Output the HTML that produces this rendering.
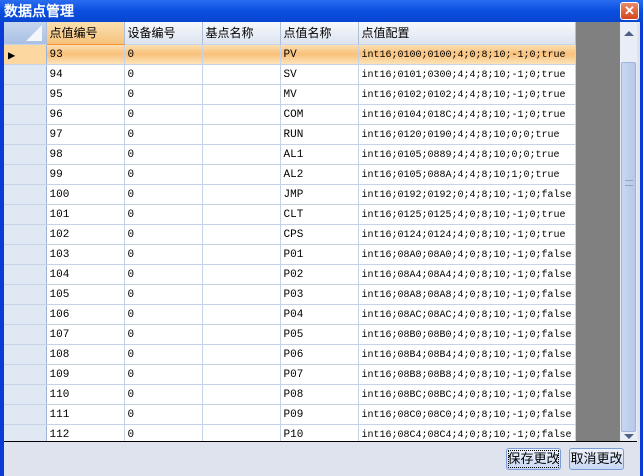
<!DOCTYPE html>
<html><head><meta charset="utf-8"><style>
*{margin:0;padding:0;box-sizing:border-box}
body{width:643px;height:476px;overflow:hidden;background:#0a3bd6;font-family:"Liberation Sans","WenQuanYi Zen Hei",sans-serif;position:relative}
.title{position:absolute;left:0;top:0;width:643px;height:22px;background:linear-gradient(#2a6cf0,#0a4ee0 50%,#0846d0);color:#fff;font-weight:bold;font-size:14px;line-height:22px;padding-left:4px;font-family:"WenQuanYi Zen Hei",sans-serif}
.close{position:absolute;right:4px;top:2px;width:19px;height:18px;background:linear-gradient(#e88a6a,#d4461e);border:1px solid #fff;border-radius:3px;color:#fff;font-size:13px;line-height:15px;text-align:center;font-weight:bold}
.client{position:absolute;left:4px;top:22px;width:636px;height:454px;background:#dfe3ee}
.grid{position:absolute;left:0;top:0;width:633px;height:420px;background:#808080;border-bottom:1px solid #000;overflow:hidden}
table{border-collapse:collapse;position:absolute;left:0;top:0;table-layout:fixed;width:571px;background:#fff}
td,th{height:20px;border-right:1px solid #c5d3e8;border-bottom:1px solid #c5d3e8;font-size:11px;padding-left:3px;padding-top:2px;text-align:left;white-space:nowrap;overflow:hidden;font-weight:normal}
th{height:22px;padding-top:0;background:linear-gradient(#f6f8fc,#dde4ef);font-size:12px;color:#000;border-right:1px solid #b0bfd6}
td.rh{background:#e0e8f4;border-right:1px solid #9fb5d6}
td{font-family:"Liberation Mono",monospace;font-size:11px}
td.c{font-size:10px}
tr.sel td{background:linear-gradient(#fde2b6,#f9c07a 50%,#fde2b6)}
tr.sel td.rh{background:#fcd7a0}
th.sel{background:linear-gradient(#fbe0b0,#f6c27c);border-bottom:1px solid #f29536}
.sb{position:absolute;left:616px;top:0;width:17px;height:420px;background:#e9edf5}
.thumb{position:absolute;left:617px;top:40px;width:15px;height:370px;background:linear-gradient(90deg,#c9d7f0,#b6c8ea);border:1px solid #9fb3dc;border-radius:2px}
.btn{position:absolute;top:426px;height:22px;width:55px;border:1px solid #7b9bd6;border-radius:3px;background:linear-gradient(#eef3fc,#c8d8f4);font-size:13px;text-align:center;line-height:20px;font-family:"WenQuanYi Zen Hei",sans-serif}
</style></head><body>
<div class="title">数据点管理<div class="close">✕</div></div>
<div class="client">
<div class="grid">
<table>
<colgroup><col style="width:42px"><col style="width:78px"><col style="width:78px"><col style="width:78px"><col style="width:78px"><col style="width:217px"></colgroup>
<tr><th style="background:linear-gradient(#c6d6ee,#a9c0e4);position:relative"><span style="position:absolute;right:4px;bottom:3px;width:0;height:0;border-left:16px solid transparent;border-bottom:16px solid #f4f6fb"></span></th><th class="sel">点值编号</th><th>设备编号</th><th>基点名称</th><th>点值名称</th><th>点值配置</th></tr>
<tr class="sel"><td class="rh" style="font-size:12px;padding-left:4px">▶</td><td>93</td><td>0</td><td></td><td>PV</td><td class="c">int16;0100;0100;4;0;8;10;-1;0;true</td></tr>
<tr><td class="rh"></td><td>94</td><td>0</td><td></td><td>SV</td><td class="c">int16;0101;0300;4;4;8;10;-1;0;true</td></tr>
<tr><td class="rh"></td><td>95</td><td>0</td><td></td><td>MV</td><td class="c">int16;0102;0102;4;4;8;10;-1;0;true</td></tr>
<tr><td class="rh"></td><td>96</td><td>0</td><td></td><td>COM</td><td class="c">int16;0104;018C;4;4;8;10;-1;0;true</td></tr>
<tr><td class="rh"></td><td>97</td><td>0</td><td></td><td>RUN</td><td class="c">int16;0120;0190;4;4;8;10;0;0;true</td></tr>
<tr><td class="rh"></td><td>98</td><td>0</td><td></td><td>AL1</td><td class="c">int16;0105;0889;4;4;8;10;0;0;true</td></tr>
<tr><td class="rh"></td><td>99</td><td>0</td><td></td><td>AL2</td><td class="c">int16;0105;088A;4;4;8;10;1;0;true</td></tr>
<tr><td class="rh"></td><td>100</td><td>0</td><td></td><td>JMP</td><td class="c">int16;0192;0192;0;4;8;10;-1;0;false</td></tr>
<tr><td class="rh"></td><td>101</td><td>0</td><td></td><td>CLT</td><td class="c">int16;0125;0125;4;0;8;10;-1;0;true</td></tr>
<tr><td class="rh"></td><td>102</td><td>0</td><td></td><td>CPS</td><td class="c">int16;0124;0124;4;0;8;10;-1;0;true</td></tr>
<tr><td class="rh"></td><td>103</td><td>0</td><td></td><td>P01</td><td class="c">int16;08A0;08A0;4;0;8;10;-1;0;false</td></tr>
<tr><td class="rh"></td><td>104</td><td>0</td><td></td><td>P02</td><td class="c">int16;08A4;08A4;4;0;8;10;-1;0;false</td></tr>
<tr><td class="rh"></td><td>105</td><td>0</td><td></td><td>P03</td><td class="c">int16;08A8;08A8;4;0;8;10;-1;0;false</td></tr>
<tr><td class="rh"></td><td>106</td><td>0</td><td></td><td>P04</td><td class="c">int16;08AC;08AC;4;0;8;10;-1;0;false</td></tr>
<tr><td class="rh"></td><td>107</td><td>0</td><td></td><td>P05</td><td class="c">int16;08B0;08B0;4;0;8;10;-1;0;false</td></tr>
<tr><td class="rh"></td><td>108</td><td>0</td><td></td><td>P06</td><td class="c">int16;08B4;08B4;4;0;8;10;-1;0;false</td></tr>
<tr><td class="rh"></td><td>109</td><td>0</td><td></td><td>P07</td><td class="c">int16;08B8;08B8;4;0;8;10;-1;0;false</td></tr>
<tr><td class="rh"></td><td>110</td><td>0</td><td></td><td>P08</td><td class="c">int16;08BC;08BC;4;0;8;10;-1;0;false</td></tr>
<tr><td class="rh"></td><td>111</td><td>0</td><td></td><td>P09</td><td class="c">int16;08C0;08C0;4;0;8;10;-1;0;false</td></tr>
<tr><td class="rh"></td><td>112</td><td>0</td><td></td><td>P10</td><td class="c">int16;08C4;08C4;4;0;8;10;-1;0;false</td></tr>
</table>
<div class="sb"></div>
<div class="thumb"><div style="position:absolute;left:3px;top:117px;width:8px;height:6px;border-top:1px solid #8fa3c8;border-bottom:1px solid #8fa3c8"></div></div>
<div style="position:absolute;left:620px;top:9px;border:5px solid transparent;border-bottom:5px solid #4d6185;border-top:0"></div>
<div style="position:absolute;left:620px;top:412px;border:5px solid transparent;border-top:5px solid #4d6185;border-bottom:0"></div>
</div>
<div class="btn" style="left:502px;outline:1px dotted #000;outline-offset:-3px">保存更改</div>
<div class="btn" style="left:565px">取消更改</div>
</div>
</body></html>
